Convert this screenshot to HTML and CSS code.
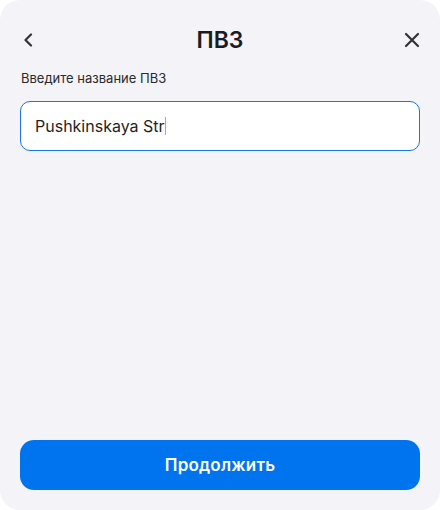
FILE: index.html
```html
<!DOCTYPE html>
<html lang="ru">

<head>
    <meta charset="UTF-8">
    <meta name="viewport" content="width=device-width, initial-scale=1.0">
    <title>ПВЗ</title>
    <link rel="stylesheet" href="styles.css">
</head>

<body>
    <div class="sheet">
        <div class="header">
            <button class="icon-btn back" aria-label="Назад">
                <svg width="12" height="14" viewBox="0 0 12 14">
                    <path d="M9 1.5 L3.5 7 L9 12.5" fill="none" stroke="#333" stroke-width="2.2" stroke-linecap="round" stroke-linejoin="round" />
                </svg>
            </button>
            <h1>ПВЗ</h1>
            <button class="icon-btn close" aria-label="Закрыть">
                <svg width="16" height="16" viewBox="0 0 16 16">
                    <path d="M2 2 L14 14 M14 2 L2 14" fill="none" stroke="#333" stroke-width="2.2" stroke-linecap="round" />
                </svg>
            </button>
        </div>

        <div class="form-group">
            <label for="pvzName">Введите название ПВЗ</label>
            <div class="field" id="pvzName">Pushkinskaya Str<span class="caret"></span></div>
        </div>

        <div class="spacer"></div>

        <button class="btn">Продолжить</button>
    </div>
</body>

</html>
```

FILE: styles.css
```css
html,
body {
    margin: 0;
    padding: 0;
    background: #fff;
}

body {
    font-family: Inter, "Noto Sans", Arial, sans-serif;
    color: #1f1f1f;
}

.sheet {
    box-sizing: border-box;
    height: 510px;
    background: #f4f3f8;
    border-radius: 20px;
    padding: 24px 20px 20px;
    display: flex;
    flex-direction: column;
}

.header {
    display: flex;
    align-items: center;
    justify-content: space-between;
    height: 32px;
}

.header h1 {
    margin: 0;
    font-size: 23px;
    font-weight: 600;
    color: #1c1c1e;
}

.icon-btn {
    width: 32px;
    height: 32px;
    padding: 0;
    border: none;
    background: none;
    display: flex;
    align-items: center;
    cursor: pointer;
}

.icon-btn.back {
    justify-content: flex-start;
    padding-left: 2px;
}

.icon-btn.close {
    justify-content: flex-end;
    padding-right: 0;
}

.form-group {
    margin-top: 14px;
}

.form-group label {
    display: block;
    font-size: 13px;
    color: #2a2a2c;
    margin: 0 0 15px 1px;
}

.field {
    box-sizing: border-box;
    height: 50px;
    background: #fff;
    border: 1px solid #1677e8;
    border-radius: 10px;
    padding: 0 14px;
    display: flex;
    align-items: center;
    font-size: 16px;
    color: #1f1f1f;
}

.caret {
    display: inline-block;
    width: 1px;
    height: 18px;
    background: #7fb0f5;
}

.spacer {
    flex: 1;
}

.btn {
    height: 50px;
    border: none;
    border-radius: 14px;
    background: #0073ee;
    color: #fff;
    font-family: inherit;
    font-size: 17px;
    font-weight: 600;
    letter-spacing: 0.2px;
    cursor: pointer;
}

.btn:hover {
    background: #0a68d4;
}
```
